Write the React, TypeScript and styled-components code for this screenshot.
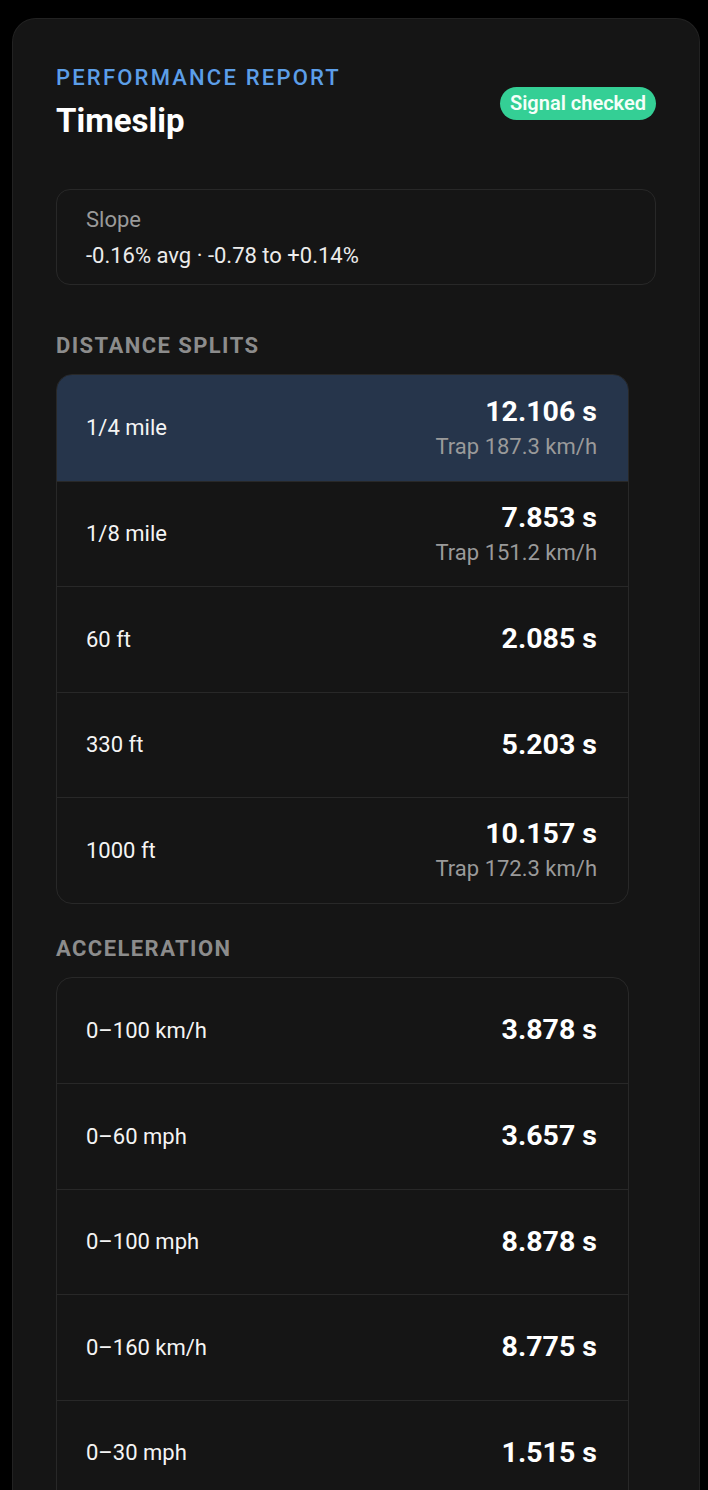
import React from "react";
import styled, { createGlobalStyle } from "styled-components";

const Global = createGlobalStyle`
  html, body { margin: 0; padding: 0; background: #000; }
  body { font-family: Roboto, "Noto Sans", Arial, sans-serif; color: #f2f2f2; -webkit-font-smoothing: antialiased; }
`;

const Page = styled.div`
  padding: 18px 8px 0 12px;
  min-height: 1490px;
  box-sizing: border-box;
`;

const Card = styled.section`
  background: #151515;
  border: 1px solid #222;
  border-bottom: none;
  border-radius: 24px 24px 0 0;
  padding: 45px 43px 60px 43px;
  min-height: 1520px;
  box-sizing: border-box;
`;

const Header = styled.header`
  display: flex;
  align-items: center;
  justify-content: space-between;
`;

const TitleBlock = styled.div`
  display: flex;
  flex-direction: column;
  gap: 9px;
`;

const Eyebrow = styled.div`
  color: #5c9ee8;
  font-size: 22px;
  font-weight: 500;
  letter-spacing: 0.1em;
  line-height: 28px;
`;

const Title = styled.h1`
  margin: 0;
  font-size: 33px;
  font-weight: 700;
  line-height: 40px;
  color: #fff;
`;

const Badge = styled.span`
  background: #34cf95;
  color: #f4fff9;
  font-size: 20px;
  font-weight: 600;
  line-height: 33px;
  padding: 0 10px;
  border-radius: 17px;
  margin-top: 2px;
`;

const InfoBox = styled.div`
  margin-top: 48px;
  border: 1px solid #282828;
  border-radius: 14px;
  padding: 17px 29px 15px;
  display: flex;
  flex-direction: column;
  gap: 10px;
`;

const InfoLabel = styled.div`
  color: #9a9a9a;
  font-size: 22px;
  line-height: 26px;
`;

const InfoValue = styled.div`
  color: #ececec;
  font-size: 22px;
  line-height: 26px;
`;

const Section = styled.div<{ $top: number }>`
  margin-top: ${(p) => p.$top}px;
  display: flex;
  flex-direction: column;
  gap: 16px;
`;

const SectionTitle = styled.h2`
  margin: 0;
  color: #8c8c8c;
  font-size: 22px;
  font-weight: 700;
  letter-spacing: 0.065em;
  line-height: 24px;
`;

const List = styled.div`
  width: calc(100% - 29px);
  border: 1px solid #282828;
  border-radius: 16px;
  overflow: hidden;
`;

const Row = styled.div<{ $active?: boolean }>`
  height: 105.5px;
  box-sizing: border-box;
  display: flex;
  align-items: center;
  justify-content: space-between;
  padding: 0 31px 0 29px;
  background: ${(p) => (p.$active ? "#26354b" : "transparent")};
  & + & { border-top: 1px solid #282828; }
`;

const RowLabel = styled.div`
  font-size: 22px;
  color: #f4f4f4;
`;

const RowValues = styled.div`
  display: flex;
  flex-direction: column;
  align-items: flex-end;
  gap: 6px;
`;

const Value = styled.div`
  font-size: 28.5px;
  font-weight: 700;
  color: #fff;
  line-height: 32px;
`;

const Trap = styled.div`
  font-size: 22px;
  color: #9a9a9a;
  line-height: 26px;
`;

type Item = { label: string; value: string; trap?: string; active?: boolean };

const splits: Item[] = [
  { label: "1/4 mile", value: "12.106 s", trap: "Trap 187.3 km/h", active: true },
  { label: "1/8 mile", value: "7.853 s", trap: "Trap 151.2 km/h" },
  { label: "60 ft", value: "2.085 s" },
  { label: "330 ft", value: "5.203 s" },
  { label: "1000 ft", value: "10.157 s", trap: "Trap 172.3 km/h" },
];

const accel: Item[] = [
  { label: "0\u2013100 km/h", value: "3.878 s" },
  { label: "0\u201360 mph", value: "3.657 s" },
  { label: "0\u2013100 mph", value: "8.878 s" },
  { label: "0\u2013160 km/h", value: "8.775 s" },
  { label: "0\u201330 mph", value: "1.515 s" },
];

const Rows = ({ items }: { items: Item[] }) => (
  <List>
    {items.map((it) => (
      <Row key={it.label} $active={it.active}>
        <RowLabel>{it.label}</RowLabel>
        <RowValues>
          <Value>{it.value}</Value>
          {it.trap && <Trap>{it.trap}</Trap>}
        </RowValues>
      </Row>
    ))}
  </List>
);

export default function App() {
  return (
    <Page>
      <Global />
      <Card>
        <Header>
          <TitleBlock>
            <Eyebrow>PERFORMANCE REPORT</Eyebrow>
            <Title>Timeslip</Title>
          </TitleBlock>
          <Badge>Signal checked</Badge>
        </Header>
        <InfoBox>
          <InfoLabel>Slope</InfoLabel>
          <InfoValue>-0.16% avg · -0.78 to +0.14%</InfoValue>
        </InfoBox>
        <Section $top={49}>
          <SectionTitle>DISTANCE SPLITS</SectionTitle>
          <Rows items={splits} />
        </Section>
        <Section $top={33}>
          <SectionTitle>ACCELERATION</SectionTitle>
          <Rows items={accel} />
        </Section>
      </Card>
    </Page>
  );
}
